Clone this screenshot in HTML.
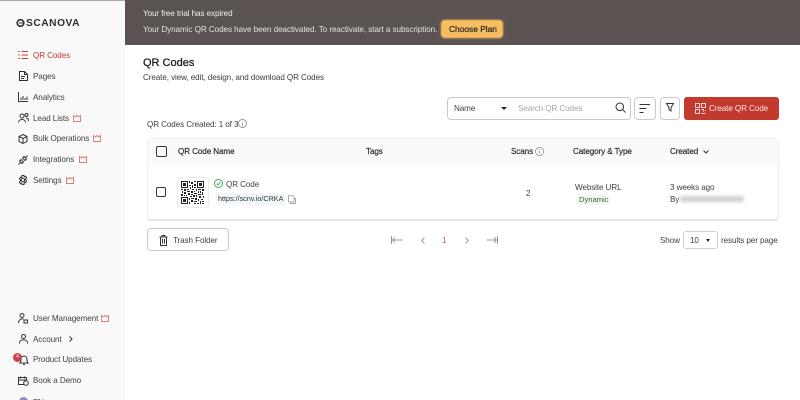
<!DOCTYPE html>
<html><head><meta charset="utf-8"><style>
html,body{margin:0;padding:0;background:#fff}
body{width:800px;height:400px;overflow:hidden;position:relative;font-family:"Liberation Sans",sans-serif;color:#3f3f3f;font-size:8.1px;letter-spacing:-.09px}
#w{position:absolute;left:0;top:0;width:800px;height:400px;overflow:hidden;filter:blur(.3px)}
.t{position:absolute;white-space:nowrap;line-height:12px;margin-top:1px}
.m{-webkit-text-stroke:.22px currentColor;color:#333}
.b{position:absolute;box-sizing:border-box}
svg{position:absolute;overflow:visible;fill:none;stroke:#333;stroke-width:1}
svg.c{stroke:#d9827c}
</style></head><body><div id="w">
<div class="b" style="left:0;top:0;width:125px;height:400px;background:#f9f9f9"></div>
<div class="b" style="left:0;top:0;width:125px;height:1px;background:#a9a9a9"></div>
<div class="b" style="left:125px;top:0;width:675px;height:45px;background:#5b5351"></div>

<svg style="left:16px;top:18px" width="10" height="10" viewBox="0 0 10 10"><circle cx="4.500" cy="5" r="3.300" stroke="#333" stroke-width="1.700"/><path d="M3 5h4" stroke="#333"/></svg>
<div class="t" style="left:26px;top:17px;font-size:10.200px;font-weight:bold;letter-spacing:.55px;color:#2f2f2f">SCANOVA</div>

<svg style="left:18px;top:50px;stroke:#c9433a" width="10" height="10" viewBox="0 0 10 10"><path d="M3.500 1.500H10M3.500 5H10M3.500 8.500H10M0 1.500h1.500M0 5h1.500M0 8.500h1.500"/></svg>
<div class="t" style="left:33px;top:49px;color:#c5392f">QR Codes</div>

<svg style="left:19px;top:71px" width="9" height="10" viewBox="0 0 9 10"><path d="M.5.500h5l3 3v6h-8zM5.500.500v3h3M2 5.500h4M2 7.500h3"/></svg>
<div class="t" style="left:33px;top:70px">Pages</div>

<svg style="left:18px;top:92px" width="10" height="10" viewBox="0 0 10 10"><path d="M.5 0v9.500H10M3 8V5.500M5 8V4M7 8V6M9 8V4.500"/></svg>
<div class="t" style="left:33px;top:91px">Analytics</div>

<svg style="left:18px;top:113px" width="11" height="10" viewBox="0 0 11 10"><circle cx="4" cy="3" r="2"/><circle cx="8.500" cy="2" r="1.500"/><path d="M.5 9.500c0-4 7-4 7 0M8 5c2 0 2.500 1.500 2.500 3"/></svg>
<div class="t" style="left:33px;top:112px">Lead Lists</div>
<svg class="c" style="left:73px;top:115px" width="8" height="7" viewBox="0 0 8 7"><path d="M.5.500l2 1.500L4 .5l1.500 1.500 2-1.500v6h-7z"/></svg>

<svg style="left:18px;top:134px" width="10" height="10" viewBox="0 0 10 10"><path d="M5 .5l4 2v5l-4 2-4-2v-5zM1 2.500l4 2 4-2M5 4.500v5"/></svg>
<div class="t" style="left:33px;top:132px">Bulk Operations</div>
<svg class="c" style="left:93px;top:135px" width="8" height="7" viewBox="0 0 8 7"><path d="M.5.500l2 1.500L4 .5l1.500 1.500 2-1.500v6h-7z"/></svg>

<svg style="left:18px;top:155px" width="10" height="10" viewBox="0 0 10 10"><path d="M.5 9.500l2-2M7.500 2.500l2-2M1.500 6l2.500 2.500 1.500-1.500-2.500-2.500zM4.500 3l2.500 2.500 1.500-1.500L6 1.500z"/></svg>
<div class="t" style="left:33px;top:153px">Integrations</div>
<svg class="c" style="left:79px;top:156px" width="8" height="7" viewBox="0 0 8 7"><path d="M.5.500l2 1.500L4 .5l1.500 1.500 2-1.500v6h-7z"/></svg>

<svg style="left:18px;top:175px" width="10" height="10" viewBox="0 0 10 10"><circle cx="5" cy="5" r="1.700"/><path d="M4 .5h2l.3 1.300 1.300-.5 1 1.700-1 .9v1.200l1 .9-1 1.700-1.300-.5L6 9.500H4l-.3-1.300-1.300.5-1-1.700 1-.9V4.900l-1-.9 1-1.700 1.300.5z"/></svg>
<div class="t" style="left:33px;top:174px">Settings</div>
<svg class="c" style="left:66px;top:177px" width="8" height="7" viewBox="0 0 8 7"><path d="M.5.500l2 1.500L4 .5l1.500 1.500 2-1.500v6h-7z"/></svg>

<svg style="left:18px;top:313px" width="10" height="11" viewBox="0 0 10 11"><circle cx="4" cy="2.500" r="2"/><path d="M.5 10c0-3.500 3-4.500 5-4M6 7h3.500v3H6z"/></svg>
<div class="t" style="left:33px;top:312px">User Management</div>
<svg class="c" style="left:101px;top:315px" width="8" height="7" viewBox="0 0 8 7"><path d="M.5.500l2 1.500L4 .5l1.500 1.500 2-1.500v6h-7z"/></svg>

<svg style="left:19px;top:334px" width="9" height="10" viewBox="0 0 9 10"><circle cx="4.500" cy="2.500" r="2"/><path d="M.5 9.500v-1c0-3.500 8-3.500 8 0v1"/></svg>
<div class="t" style="left:33px;top:333px">Account</div>
<svg style="left:69px;top:336px" width="4" height="6" viewBox="0 0 4 6"><path d="M.5.500L3 3 .5 5.500"/></svg>

<svg style="left:19px;top:355px" width="10" height="10" viewBox="0 0 10 10"><path d="M1 8c1-1 1-2 1-3.500C2 2 3.500 1 5 1s3 1 3 3.500C8 6 8 7 9 8zM4 9.500h2"/></svg>
<div class="b" style="left:13px;top:353px;width:9px;height:9px;border-radius:50%;background:#c9434f;color:#fff;font-size:5px;line-height:9px;text-align:center">4</div>
<div class="t" style="left:33px;top:353px">Product Updates</div>

<svg style="left:18px;top:376px" width="11" height="10" viewBox="0 0 11 10"><path d="M6 8.500H.5v-7h8V4M.5 4h8M2.500.5v2M6.500.5v2"/><circle cx="8" cy="7" r="2.300"/></svg>
<div class="t" style="left:33px;top:374px">Book a Demo</div>

<div class="b" style="left:19px;top:397px;width:9px;height:9px;border-radius:50%;background:#8d8fc4"></div>
<div class="t" style="left:33px;top:396px">EN</div>

<div class="t" style="left:143px;top:7px;color:#f2f0ef">Your free trial has expired</div>
<div class="t" style="left:143px;top:23px;color:#e6e3e1;letter-spacing:-.055px">Your Dynamic QR Codes have been deactivated. To reactivate, start a subscription.</div>
<div class="b" style="left:441px;top:20px;width:62px;height:18px;background:#f5be62;border:1px solid #e4a94e;border-radius:4px;box-shadow:0 0 2px #f0c070"></div>
<div class="t m" style="left:449px;top:22px;color:#33291c;font-size:8.400px;letter-spacing:0">Choose Plan</div>

<div class="t m" style="left:143px;top:56px;font-size:11px;color:#222;letter-spacing:0;-webkit-text-stroke:.3px #222">QR Codes</div>
<div class="t" style="left:143px;top:71px;color:#3c3c3c">Create, view, edit, design, and download QR Codes</div>

<div class="b" style="left:447px;top:97px;width:184px;height:23px;border:1px solid #c9c9c9;border-radius:4px;background:#fff"></div>
<div class="t" style="left:454px;top:102px">Name</div>
<div class="b" style="left:501px;top:107px;border-left:3px solid transparent;border-right:3px solid transparent;border-top:3px solid #222"></div>
<div class="t" style="left:518px;top:102px;color:#a5a5a5">Search QR Codes</div>
<svg style="left:615px;top:102px" width="11" height="11" viewBox="0 0 11 11"><circle cx="4.800" cy="4.800" r="3.800"/><path d="M7.700 7.700l2.800 2.800"/></svg>

<div class="b" style="left:634px;top:97px;width:22px;height:23px;border:1px solid #c9c9c9;border-radius:4px"></div>
<svg style="left:639px;top:104px" width="12" height="10" viewBox="0 0 12 10"><path d="M.5.500h10.500M.5 4.500h7M.5 8.500h4"/></svg>
<div class="b" style="left:660px;top:97px;width:20px;height:23px;border:1px solid #c9c9c9;border-radius:4px"></div>
<svg style="left:666px;top:103px" width="9" height="9" viewBox="0 0 9 9"><path d="M.5.500h7L5 4.500V8L3 7V4.500z"/></svg>

<div class="b" style="left:684px;top:97px;width:95px;height:23px;background:#c23a2e;border-radius:3px"></div>
<svg style="left:695px;top:103px;stroke:#f6d6d2" width="11" height="11" viewBox="0 0 11 11"><path d="M.5.500h4v4h-4zM6.500.500h4v4h-4zM.5 6.500h4v4h-4zM6.500 6.500h2v2M10.500 7v1M6.500 10.500h4"/></svg>
<div class="t" style="left:709px;top:102px;color:#fbe6e3">Create QR Code</div>

<div class="t" style="left:147px;top:118px">QR Codes Created: 1 of 3</div>
<svg style="left:238px;top:119px;stroke:#777;stroke-width:.7" width="9" height="9" viewBox="0 0 9 9"><circle cx="4.500" cy="4.500" r="4"/><path d="M4.500 4v2.800M4.500 2.200v.8"/></svg>

<div class="b" style="left:147px;top:138px;width:632px;height:83px;background:#fff;border:1px solid #efefef;border-bottom:2px solid #e6e6e6;border-radius:4px"></div>
<div class="b" style="left:148px;top:139px;width:630px;height:26px;background:#fafafa;border-radius:4px 4px 0 0"></div>
<div class="b" style="left:156px;top:146px;width:11px;height:11px;border:1.400px solid #333;border-radius:2px"></div>
<div class="t m" style="left:178px;top:145px">QR Code Name</div>
<div class="t m" style="left:366px;top:145px">Tags</div>
<div class="t m" style="left:511px;top:145px">Scans</div>
<svg style="left:535px;top:147px;stroke:#888;stroke-width:.7" width="9" height="9" viewBox="0 0 9 9"><circle cx="4.500" cy="4.500" r="4"/><path d="M4.500 4v2.800M4.500 2.200v.8"/></svg>
<div class="t m" style="left:573px;top:145px">Category &amp; Type</div>
<div class="t m" style="left:670px;top:145px">Created</div>
<svg style="left:703px;top:150px" width="6" height="4" viewBox="0 0 6 4"><path d="M.5.500L3 3 5.500.500"/></svg>

<div class="b" style="left:156px;top:187px;width:10px;height:10px;border:1.300px solid #333;border-radius:2px"></div>
<div class="b" style="left:177px;top:177px;width:32px;height:31px;border:1px solid #ececec;border-radius:4px;background:#fff"></div>
<svg style="left:181px;top:181px;stroke:none" width="23" height="23" viewBox="0 0 23 23">
<g fill="#222"><path d="M0 0h7v7H0zM16 0h7v7h-7zM0 16h7v7H0z"/><path d="M8 0h1v2H8zM10 1h2v2h-2zM13 0h2v1h-2zM8 4h2v1H8zM11 4h1v3h-1zM13 3h2v2h-2zM9 6h1v2H9zM13 6h2v1h-2zM0 8h2v1H0zM3 8h2v2H3zM6 8h2v1H6zM11 8h2v1h-2zM15 8h1v2h-1zM17 8h3v1h-3zM21 8h2v2h-2zM1 10h1v2H1zM6 10h3v1H6zM10 10h2v2h-2zM13 10h1v1h-1zM17 10h1v2h-1zM19 10h1v2h-1zM3 11h2v2H3zM7 12h2v2H7zM13 12h3v1h-3zM21 11h1v3h-1zM0 13h2v2H0zM5 14h1v1H5zM10 13h2v1h-2zM17 13h3v1h-3zM3 14h1v1H3zM9 15h2v1H9zM12 14h2v2h-2zM15 14h1v2h-1zM18 15h2v2h-2zM22 15h1v2h-1zM8 17h1v2H8zM10 17h3v1h-3zM14 17h2v2h-2zM17 18h1v2h-1zM20 18h2v1h-2zM10 19h2v2h-2zM13 20h3v1h-3zM19 20h1v3h-1zM21 20h2v1h-2zM8 21h1v2H8zM13 22h2v1h-2zM16 22h2v1h-2zM21 22h2v1h-2z"/></g>
<g fill="#fff"><path d="M1 1h5v5H1zM17 1h5v5h-5zM1 17h5v5H1z"/></g>
<g fill="#222"><path d="M2 2h3v3H2zM18 2h3v3h-3zM2 18h3v3H2z"/></g></svg>

<svg style="left:214px;top:179px;stroke:#4aa564" width="9" height="9" viewBox="0 0 9 9"><circle cx="4.500" cy="4.500" r="4"/><path d="M2.700 4.600l1.300 1.300 2.300-2.500"/></svg>
<div class="t" style="left:226px;top:178px">QR Code</div>
<div class="b" style="left:216px;top:193px;width:69px;height:12px;background:#f1f8fb;border-radius:2px"></div>
<div class="t" style="left:218px;top:192px;font-size:7.200px;letter-spacing:0;color:#333">https://scnv.io/CRKA</div>
<svg style="left:288px;top:195px;stroke:#999;stroke-width:.8" width="8" height="9" viewBox="0 0 8 9"><path d="M.5.500h4l1.500 1.500v5h-5.500zM6 3.500h1.500v5h-5V7.500"/></svg>

<div class="t" style="left:526px;top:187px">2</div>
<div class="t" style="left:575px;top:181px">Website URL</div>
<div class="b" style="left:576px;top:194px;width:33px;height:11px;background:#f0f8f1;border-radius:2px"></div>
<div class="t" style="left:579px;top:193px;font-size:7.600px;color:#3b6b45;letter-spacing:0">Dynamic</div>
<div class="t" style="left:670px;top:181px">3 weeks ago</div>
<div class="t" style="left:670px;top:193px">By</div>
<div class="b" style="left:680px;top:196px;width:64px;height:6px;background:#d0d0d0;border-radius:3px;filter:blur(1.500px)"></div>

<div class="b" style="left:147px;top:228px;width:82px;height:23px;border:1px solid #c9c9c9;border-radius:4px;background:#fff"></div>
<svg style="left:159px;top:235px" width="9" height="11" viewBox="0 0 9 11"><path d="M.5 2h8M3 2V.5h3V2M1.500 2v8.500h6V2M3.500 4v4.500M5.500 4v4.500"/></svg>
<div class="t" style="left:173px;top:234px">Trash Folder</div>

<svg style="left:391px;top:236px;stroke:#999" width="12" height="8" viewBox="0 0 12 8"><path d="M.5 0v8M11.500 4H1.500M4 1.500L1.500 4 4 6.500"/></svg>
<svg style="left:421px;top:237px;stroke:#999" width="4" height="7" viewBox="0 0 4 7"><path d="M3.500.500L.7 3.500l2.800 3"/></svg>
<div class="t" style="left:442px;top:234px;color:#c9564c">1</div>
<svg style="left:465px;top:237px;stroke:#999" width="4" height="7" viewBox="0 0 4 7"><path d="M.5.500l2.800 3-2.800 3"/></svg>
<svg style="left:486px;top:236px;stroke:#999" width="12" height="8" viewBox="0 0 12 8"><path d="M11.500 0v8M.5 4h10M8 1.500L10.500 4 8 6.500"/></svg>

<div class="t" style="left:660px;top:234px">Show</div>
<div class="b" style="left:683px;top:231px;width:35px;height:18px;border:1px solid #cfcfcf;border-radius:3px"></div>
<div class="t" style="left:690px;top:234px">10</div>
<div class="b" style="left:706px;top:239px;border-left:2.500px solid transparent;border-right:2.500px solid transparent;border-top:3px solid #222"></div>
<div class="t" style="left:721px;top:234px">results per page</div>
</div></body></html>
